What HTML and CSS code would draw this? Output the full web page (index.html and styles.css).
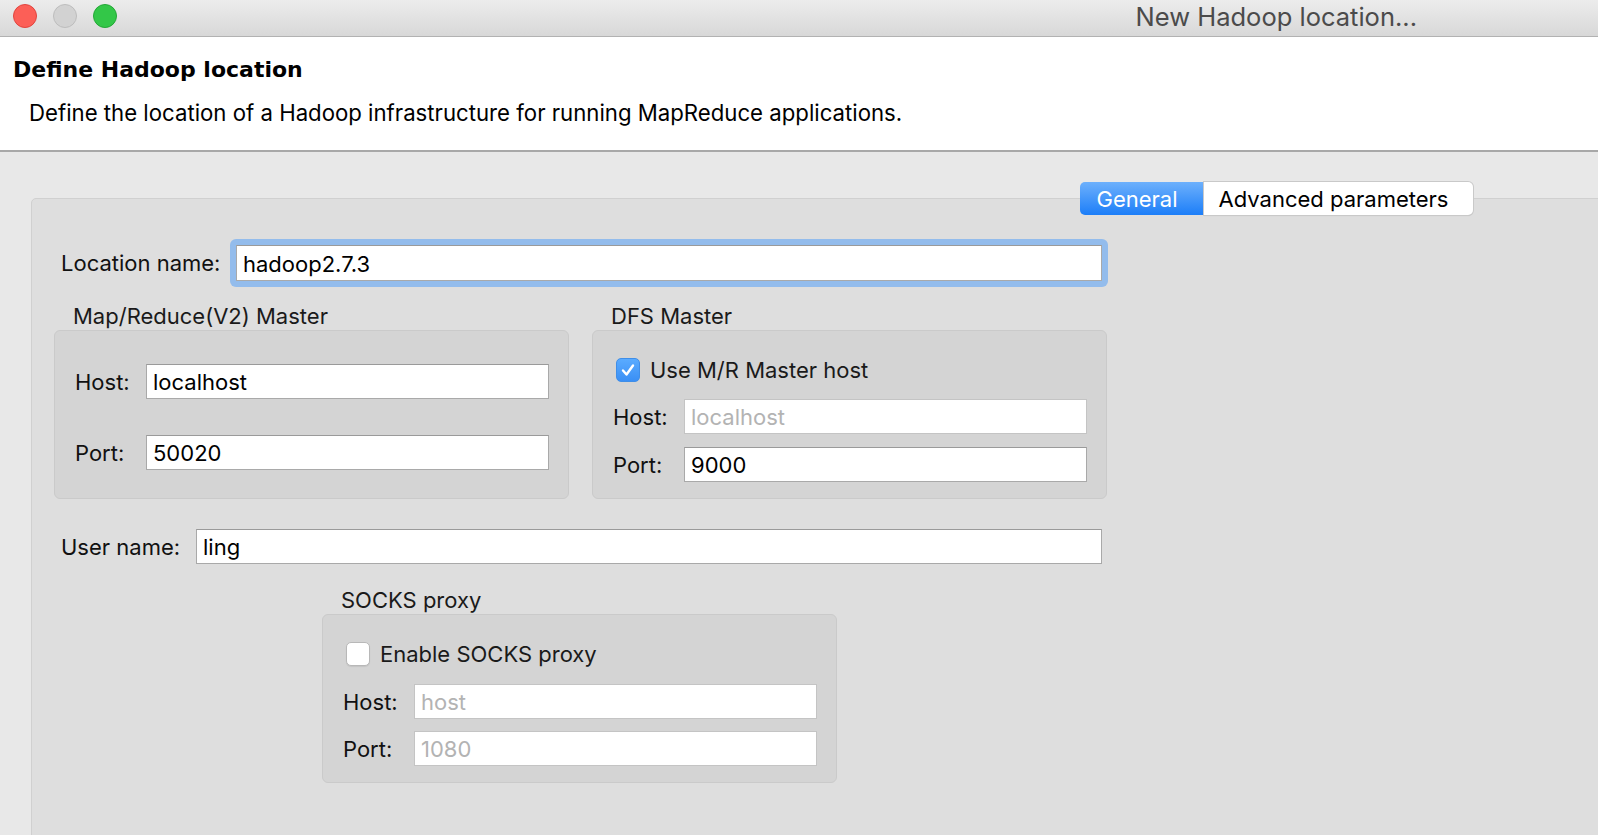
FILE: index.html
```html
<!DOCTYPE html>
<html>
<head>
<meta charset="utf-8">
<title>New Hadoop location...</title>
<link rel="stylesheet" href="styles.css">
</head>
<body>
<div class="window">
  <div class="titlebar">
    <div class="lights">
      <span class="light red"></span>
      <span class="light gray"></span>
      <span class="light green"></span>
    </div>
    <div class="wintitle">New Hadoop location...</div>
  </div>

  <div class="header">
    <h1 class="htitle">Define Hadoop location</h1>
    <p class="hdesc">Define the location of a Hadoop infrastructure for running MapReduce applications.</p>
  </div>

  <div class="content">
    <div class="tabs">
      <div class="tab tab-active">General</div>
      <div class="tab tab-plain">Advanced parameters</div>
    </div>

    <div class="pane">
      <div class="row row-loc">
        <span class="lbl lbl-loc">Location name:</span>
        <div class="focusring"><div class="field field-loc">hadoop2.7.3</div></div>
      </div>

      <div class="groups">
        <section class="group">
          <div class="gtitle">Map/Reduce(V2) Master</div>
          <div class="gbox gbox-mr">
            <div class="frow"><span class="lbl lbl-in">Host:</span><div class="field">localhost</div></div>
            <div class="frow frow-gap-mr"><span class="lbl lbl-in">Port:</span><div class="field">50020</div></div>
          </div>
        </section>
        <section class="group">
          <div class="gtitle">DFS Master</div>
          <div class="gbox gbox-dfs">
            <div class="crow"><span class="check check-on"><svg viewBox="0 0 24 24" width="24" height="24"><path d="M7 12.5 L10.5 16.5 L17 7.5" fill="none" stroke="#fff" stroke-width="2.4" stroke-linecap="round" stroke-linejoin="round"/></svg></span><span class="clbl">Use M/R Master host</span></div>
            <div class="frow frow-gap-a"><span class="lbl lbl-in">Host:</span><div class="field field-off">localhost</div></div>
            <div class="frow frow-gap-b"><span class="lbl lbl-in">Port:</span><div class="field">9000</div></div>
          </div>
        </section>
      </div>

      <div class="row row-user">
        <span class="lbl lbl-user">User name:</span>
        <div class="field field-user">ling</div>
      </div>

      <section class="group group-socks">
        <div class="gtitle">SOCKS proxy</div>
        <div class="gbox gbox-socks">
          <div class="crow"><span class="check check-off"></span><span class="clbl">Enable SOCKS proxy</span></div>
          <div class="frow frow-gap-c"><span class="lbl lbl-in">Host:</span><div class="field field-off">host</div></div>
          <div class="frow frow-gap-d"><span class="lbl lbl-in">Port:</span><div class="field field-off">1080</div></div>
        </div>
      </section>
    </div>
  </div>
</div>
</body>
</html>
```
FILE: styles.css
```css
html, body {
  margin: 0;
  padding: 0;
  overflow: hidden;
  height: 100%;
}
body {
  background: #e8e8e8;
  font-family: "Inter", "Noto Sans", sans-serif;
  color: #1a1a1a;
}
.window {
  width: 1598px;
  height: 835px;
  overflow: hidden;
}

/* title bar */
.titlebar {
  height: 36px;
  border-bottom: 1px solid #b2b2b2;
  background: linear-gradient(#ececec, #d8d8d8);
  display: flex;
  align-items: flex-start;
}
.lights {
  display: flex;
  gap: 16px;
  padding: 4px 0 0 13px;
}
.light {
  width: 24px;
  height: 24px;
  border-radius: 50%;
  box-sizing: border-box;
}
.red { background: #fc5f57; border: 1px solid #e1443e; }
.gray { background: #d2d2d2; border: 1px solid #bdbdbd; }
.green { background: #33c748; border: 1px solid #24a737; }
.wintitle {
  margin-left: auto;
  padding-right: 181px;
  font-size: 25.5px;
  line-height: 34px;
  color: #4b4b4b;
}

/* header */
.header {
  background: #fff;
  border-bottom: 2px solid #a8a8a8;
  height: 115px;
  box-sizing: border-box;
  padding: 20px 0 0 13px;
}
.htitle {
  margin: 0;
  font-family: "DejaVu Sans", sans-serif;
  font-weight: bold;
  font-size: 22px;
  line-height: 26px;
  color: #000;
}
.hdesc {
  margin: 17px 0 0 16px;
  font-size: 22.2px;
  line-height: 26px;
  color: #000;
}

/* tabs */
.content {
  padding-top: 30px;
}
.tabs {
  display: flex;
  margin-left: 1080px;
  position: relative;
  z-index: 1;
}
.tab {
  height: 33px;
  box-sizing: border-box;
  font-size: 22px;
  line-height: 35px;
  text-align: center;
  padding-right: 10px;
}
.tab-active {
  width: 124px;
  color: #fff;
  border-radius: 5px 0 0 5px;
  background: linear-gradient(#6db0fc, #1c7ef8);
}
.tab-plain {
  width: 269px;
  background: #fff;
  border-radius: 0 5px 5px 0;
  box-shadow: 0 0 0 1px #c9c9c9, 0 1px 1px rgba(0,0,0,0.15);
  color: #000;
}

.pane {
  margin: -17px -1200px 0 31px;
  height: 700px;
  background: #dedede;
  border: 1px solid #d0d0d0;
  border-radius: 5px;
  padding-top: 40px;
  box-sizing: border-box;
}

.row {
  display: flex;
  align-items: center;
}
.lbl {
  flex: none;
  font-size: 22px;
  line-height: 26px;
  color: #111;
}
.lbl-loc { width: 169px; margin-left: 29px; }
.lbl-user { width: 135px; margin-left: 29px; }
.lbl-in { width: 71px; }

.focusring {
  width: 878px;
  box-sizing: border-box;
  padding: 6px;
  border-radius: 6px;
  background: #93bcec;
}
.field {
  height: 35px;
  box-sizing: border-box;
  background: #fff;
  border: 1px solid #a9a9a9;
  border-top-color: #9a9a9a;
  padding: 1px 6px 0;
  font-size: 22px;
  line-height: 33px;
  color: #000;
  width: 403px;
}
.field-loc { width: 100%; height: 36px; line-height: 34px; }
.field-user { width: 906px; }
.field-off { color: #b3b3b3; border-color: #c4c4c4; }

.groups {
  display: flex;
  gap: 23px;
  margin: 16px 0 0 22px;
}
.group { width: 515px; }
.gtitle {
  font-size: 22px;
  line-height: 26px;
  padding-left: 19px;
  margin-bottom: 1px;
  color: #1a1a1a;
}
.gbox {
  height: 169px;
  box-sizing: border-box;
  background: #d4d4d4;
  border: 1px solid #cacaca;
  border-radius: 6px;
  padding: 0 19px 0 20px;
}
.gbox-mr { padding-top: 33px; }
.gbox-dfs, .gbox-socks { padding-top: 26px; }
.frow { display: flex; align-items: center; }
.frow-gap-mr { margin-top: 36px; }
.frow-gap-a { margin-top: 16px; }
.frow-gap-b { margin-top: 13px; }
.frow-gap-c { margin-top: 17px; }
.frow-gap-d { margin-top: 12px; }

.crow {
  display: flex;
  align-items: center;
  height: 26px;
}
.check {
  flex: none;
  width: 24px;
  height: 24px;
  box-sizing: border-box;
  border-radius: 5px;
  margin-left: 3px;
  margin-right: 10px;
  display: flex;
}
.check-on {
  background: linear-gradient(#5aabff, #3a8ff5);
  border: 1px solid #3f8ee8;
}
.check-on svg { margin: -1px; }
.check-off {
  background: #fff;
  border: 1px solid #b8b8b8;
  box-shadow: 0 1px 1px rgba(0,0,0,0.08);
}
.clbl {
  font-size: 22px;
  line-height: 26px;
  color: #1a1a1a;
}

.row-user { margin-top: 30px; }
.group-socks { margin: 23px 0 0 290px; }
```
